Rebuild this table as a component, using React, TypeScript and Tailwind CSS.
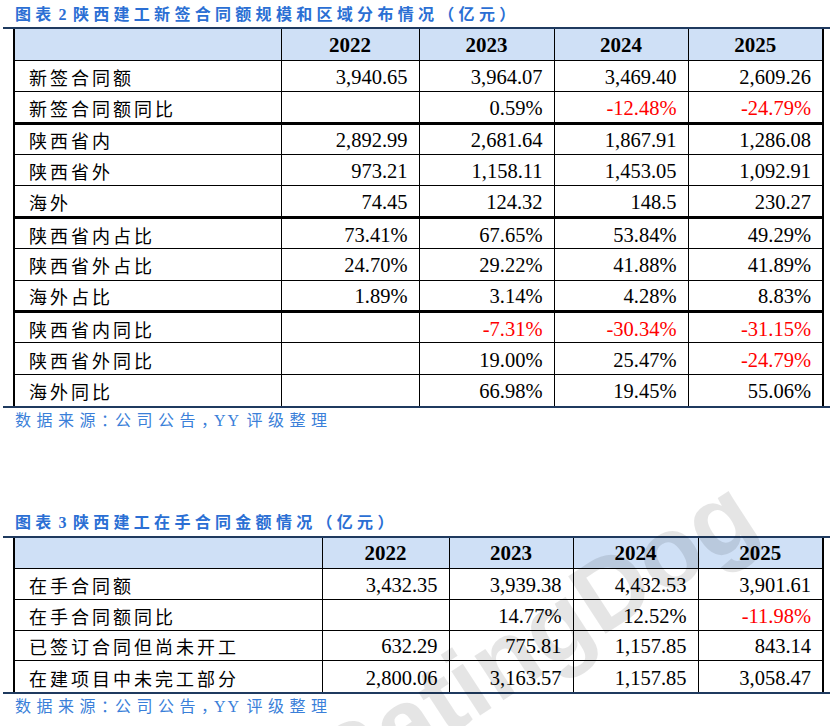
import React from 'react';

type Row = { label: string; values: string[]; thick?: boolean };

const newContracts: Row[] = [
  { label: '新签合同额', values: ['3,940.65', '3,964.07', '3,469.40', '2,609.26'] },
  { label: '新签合同额同比', values: ['', '0.59%', '-12.48%', '-24.79%'], thick: true },
  { label: '陕西省内', values: ['2,892.99', '2,681.64', '1,867.91', '1,286.08'] },
  { label: '陕西省外', values: ['973.21', '1,158.11', '1,453.05', '1,092.91'] },
  { label: '海外', values: ['74.45', '124.32', '148.5', '230.27'], thick: true },
  { label: '陕西省内占比', values: ['73.41%', '67.65%', '53.84%', '49.29%'] },
  { label: '陕西省外占比', values: ['24.70%', '29.22%', '41.88%', '41.89%'] },
  { label: '海外占比', values: ['1.89%', '3.14%', '4.28%', '8.83%'], thick: true },
  { label: '陕西省内同比', values: ['', '-7.31%', '-30.34%', '-31.15%'] },
  { label: '陕西省外同比', values: ['', '19.00%', '25.47%', '-24.79%'] },
  { label: '海外同比', values: ['', '66.98%', '19.45%', '55.06%'] },
];

const backlog: Row[] = [
  { label: '在手合同额', values: ['3,432.35', '3,939.38', '4,432.53', '3,901.61'] },
  { label: '在手合同额同比', values: ['', '14.77%', '12.52%', '-11.98%'] },
  { label: '已签订合同但尚未开工', values: ['632.29', '775.81', '1,157.85', '843.14'] },
  { label: '在建项目中未完工部分', values: ['2,800.06', '3,163.57', '1,157.85', '3,058.47'] },
];

const years = ['2022', '2023', '2024', '2025'];

const Title = ({ num, text, className }: { num: string; text: string; className: string }) => (
  <div
    className={`${className} pl-[15px] pt-[5px] text-[16px] leading-[20px] font-bold tracking-[4.3px] text-[#2b6fd4] font-['Liberation_Serif','Noto_Sans_CJK_SC',serif] whitespace-nowrap`}
  >
    图表<span className="ml-[3px] mr-[2px]">{num}</span>
    {text}
  </div>
);

// full-width punctuation in the reference is set tighter than the ideographs
const Source = ({ className }: { className: string }) => (
  <div
    className={`${className} pl-[15px] text-[16px] leading-[20px] tracking-[5.5px] text-[#3a7fd9] font-['Liberation_Serif','Noto_Sans_CJK_SC',serif] whitespace-nowrap`}
  >
    数据来源<span className="tracking-[-2px]">：</span>公司公告
    <span className="tracking-[-3px]">，</span>
    <span className="tracking-[2px]">YY </span>评级整理
  </div>
);

const DataTable = ({ rows, cols, rowH }: { rows: Row[]; cols: string[]; rowH: string }) => (
  <div className="ml-[3px] w-[827px] border-y-2 border-[#1f3a5f]">
    <table className="ml-[10px] w-[809px] table-fixed border-collapse border-x-2 border-black">
      <colgroup>
        {cols.map((c, i) => (
          <col key={i} className={c} />
        ))}
      </colgroup>
      <thead>
        <tr className={`${rowH} bg-[#cfe0f6] border-b border-black`}>
          <th className="border-r border-black" />
          {years.map((y) => (
            <th
              key={y}
              className="border-r border-black p-0 pt-[1px] text-center text-[21px] leading-[20px] font-bold text-black font-['Liberation_Serif',serif]"
            >
              {y}
            </th>
          ))}
        </tr>
      </thead>
      <tbody>
        {rows.map((r, i) => (
          <tr
            key={r.label}
            className={`${rowH} ${
              i === rows.length - 1
                ? ''
                : r.thick
                ? 'border-b-[3px] border-black'
                : 'border-b border-black'
            }`}
          >
            <td className="border-r border-black p-0 pl-[14px] pt-[2px] text-[18px] leading-[20px] tracking-[3px] text-black font-['Noto_Sans_CJK_SC',sans-serif] whitespace-nowrap">
              {r.label}
            </td>
            {r.values.map((v, j) => (
              <td
                key={j}
                className={`border-r border-black p-0 pr-[11px] pt-[2px] text-right text-[20.5px] leading-[20px] font-['Liberation_Serif',serif] ${
                  v.startsWith('-') ? 'text-[#ff0000]' : 'text-black'
                }`}
              >
                {v}
              </td>
            ))}
          </tr>
        ))}
      </tbody>
    </table>
  </div>
);

export default function App() {
  return (
    <div className="relative w-[840px] h-[726px] overflow-hidden bg-white">
      <Title num="2" text="陕西建工新签合同额规模和区域分布情况（亿元）" className="h-[27px]" />
      <DataTable
        rows={newContracts}
        rowH="h-[31.4px]"
        cols={['w-[267px]', 'w-[138px]', 'w-[135px]', 'w-[134px]', 'w-[135px]']}
      />
      <Source className="pt-[3px]" />

      <Title num="3" text="陕西建工在手合同金额情况（亿元）" className="mt-[77px] h-[28px]" />
      <DataTable
        rows={backlog}
        rowH="h-[30.8px]"
        cols={['w-[308px]', 'w-[127px]', 'w-[124px]', 'w-[125px]', 'w-[125px]']}
      />
      <Source className="pt-[3px]" />

      <div className="pointer-events-none absolute left-[532px] top-[640px] -translate-x-1/2 -translate-y-1/2 -rotate-[33deg] whitespace-nowrap text-[100px] font-bold leading-none text-black/10 font-['Liberation_Sans',sans-serif]">
        RatingDog
      </div>
    </div>
  );
}
